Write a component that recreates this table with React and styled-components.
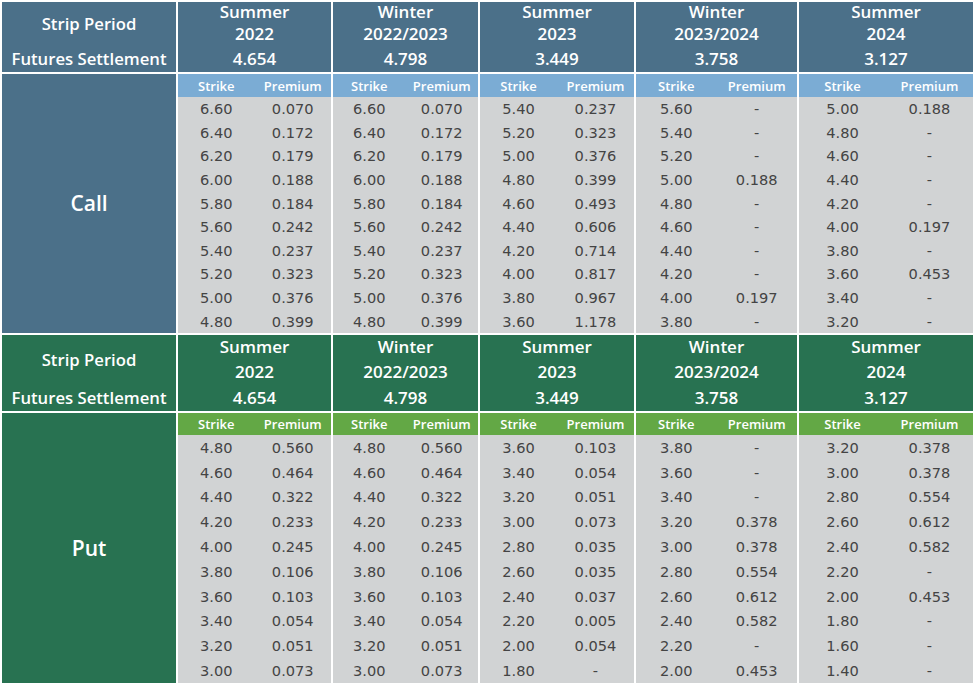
import styled, { createGlobalStyle } from 'styled-components';

const GlobalStyle = createGlobalStyle`
  html, body {
    margin: 0;
    padding: 0;
    background: #ffffff;
  }
`;

// per-section sizes: header line heights, row heights
const themes = {
  call: { dark: '#4b7089', light: '#7bacd4', lines: [20, 23, 27], rowHeight: 23.6, subHeight: 23 },
  put: { dark: '#287251', light: '#63a845', lines: [24, 26, 26], rowHeight: 24.8, subHeight: 22 },
};

const Page = styled.div`
  padding: 2px;
  display: flex;
  flex-direction: column;
  gap: 2px;
  font-family: 'Open Sans', 'Liberation Sans', sans-serif;
`;

const Section = styled.div`
  display: grid;
  grid-template-columns: 174px 153px 145px 154px 161px 174px;
  gap: 2px;
`;

const LabelHead = styled.div`
  background: ${({ $t }) => $t.dark};
  color: #fff;
  font-weight: 600;
  font-size: 16.7px;
  text-align: center;
  display: flex;
  flex-direction: column;
`;

const Line = styled.div`
  height: ${({ $h }) => $h}px;
  line-height: ${({ $h }) => $h}px;
  white-space: nowrap;
`;

const HeadCell = styled.div`
  background: ${({ $t }) => $t.dark};
  color: #fff;
  font-weight: 600;
  font-size: 17px;
  text-align: center;
  display: flex;
  flex-direction: column;
`;

const SideLabel = styled.div`
  background: ${({ $t }) => $t.dark};
  color: #fff;
  font-weight: 600;
  font-size: 21px;
  display: flex;
  align-items: center;
  justify-content: center;
`;

const Body = styled.div`
  background: #d1d3d4;
  display: flex;
  flex-direction: column;
`;

const Pair = styled.div`
  display: grid;
  grid-template-columns: 1fr 1fr;
  text-align: center;
  align-items: center;
`;

const SubHead = styled(Pair)`
  background: ${({ $t }) => $t.light};
  color: #fff;
  font-weight: 600;
  font-size: 13px;
  height: ${({ $t }) => $t.subHeight}px;
`;

const DataRow = styled(Pair)`
  height: ${({ $t }) => $t.rowHeight}px;
  color: #444444;
  font-family: 'DejaVu Sans', Verdana, sans-serif;
  font-size: 14.6px;
`;

const call = [
  { period: ['Summer', '2022'], price: '4.654', rows: [['6.60', '0.070'], ['6.40', '0.172'], ['6.20', '0.179'], ['6.00', '0.188'], ['5.80', '0.184'], ['5.60', '0.242'], ['5.40', '0.237'], ['5.20', '0.323'], ['5.00', '0.376'], ['4.80', '0.399']] },
  { period: ['Winter', '2022/2023'], price: '4.798', rows: [['6.60', '0.070'], ['6.40', '0.172'], ['6.20', '0.179'], ['6.00', '0.188'], ['5.80', '0.184'], ['5.60', '0.242'], ['5.40', '0.237'], ['5.20', '0.323'], ['5.00', '0.376'], ['4.80', '0.399']] },
  { period: ['Summer', '2023'], price: '3.449', rows: [['5.40', '0.237'], ['5.20', '0.323'], ['5.00', '0.376'], ['4.80', '0.399'], ['4.60', '0.493'], ['4.40', '0.606'], ['4.20', '0.714'], ['4.00', '0.817'], ['3.80', '0.967'], ['3.60', '1.178']] },
  { period: ['Winter', '2023/2024'], price: '3.758', rows: [['5.60', '-'], ['5.40', '-'], ['5.20', '-'], ['5.00', '0.188'], ['4.80', '-'], ['4.60', '-'], ['4.40', '-'], ['4.20', '-'], ['4.00', '0.197'], ['3.80', '-']] },
  { period: ['Summer', '2024'], price: '3.127', rows: [['5.00', '0.188'], ['4.80', '-'], ['4.60', '-'], ['4.40', '-'], ['4.20', '-'], ['4.00', '0.197'], ['3.80', '-'], ['3.60', '0.453'], ['3.40', '-'], ['3.20', '-']] },
];

const put = [
  { period: ['Summer', '2022'], price: '4.654', rows: [['4.80', '0.560'], ['4.60', '0.464'], ['4.40', '0.322'], ['4.20', '0.233'], ['4.00', '0.245'], ['3.80', '0.106'], ['3.60', '0.103'], ['3.40', '0.054'], ['3.20', '0.051'], ['3.00', '0.073']] },
  { period: ['Winter', '2022/2023'], price: '4.798', rows: [['4.80', '0.560'], ['4.60', '0.464'], ['4.40', '0.322'], ['4.20', '0.233'], ['4.00', '0.245'], ['3.80', '0.106'], ['3.60', '0.103'], ['3.40', '0.054'], ['3.20', '0.051'], ['3.00', '0.073']] },
  { period: ['Summer', '2023'], price: '3.449', rows: [['3.60', '0.103'], ['3.40', '0.054'], ['3.20', '0.051'], ['3.00', '0.073'], ['2.80', '0.035'], ['2.60', '0.035'], ['2.40', '0.037'], ['2.20', '0.005'], ['2.00', '0.054'], ['1.80', '-']] },
  { period: ['Winter', '2023/2024'], price: '3.758', rows: [['3.80', '-'], ['3.60', '-'], ['3.40', '-'], ['3.20', '0.378'], ['3.00', '0.378'], ['2.80', '0.554'], ['2.60', '0.612'], ['2.40', '0.582'], ['2.20', '-'], ['2.00', '0.453']] },
  { period: ['Summer', '2024'], price: '3.127', rows: [['3.20', '0.378'], ['3.00', '0.378'], ['2.80', '0.554'], ['2.60', '0.612'], ['2.40', '0.582'], ['2.20', '-'], ['2.00', '0.453'], ['1.80', '-'], ['1.60', '-'], ['1.40', '-']] },
];

const OptionTable = ({ label, t, strips }) => {
  const [l1, l2, l3] = t.lines;
  return (
    <Section>
      <LabelHead $t={t}>
        <Line $h={l1 + l2}>Strip Period</Line>
        <Line $h={l3}>Futures Settlement</Line>
      </LabelHead>
      {strips.map((s, i) => (
        <HeadCell key={i} $t={t}>
          <Line $h={l1}>{s.period[0]}</Line>
          <Line $h={l2}>{s.period[1]}</Line>
          <Line $h={l3}>{s.price}</Line>
        </HeadCell>
      ))}
      <SideLabel $t={t}>{label}</SideLabel>
      {strips.map((s, i) => (
        <Body key={i}>
          <SubHead $t={t}>
            <span>Strike</span>
            <span>Premium</span>
          </SubHead>
          {s.rows.map(([strike, premium], j) => (
            <DataRow key={j} $t={t}>
              <span>{strike}</span>
              <span>{premium}</span>
            </DataRow>
          ))}
        </Body>
      ))}
    </Section>
  );
};

export default function App() {
  return (
    <>
      <GlobalStyle />
      <Page>
        <OptionTable label="Call" t={themes.call} strips={call} />
        <OptionTable label="Put" t={themes.put} strips={put} />
      </Page>
    </>
  );
}
